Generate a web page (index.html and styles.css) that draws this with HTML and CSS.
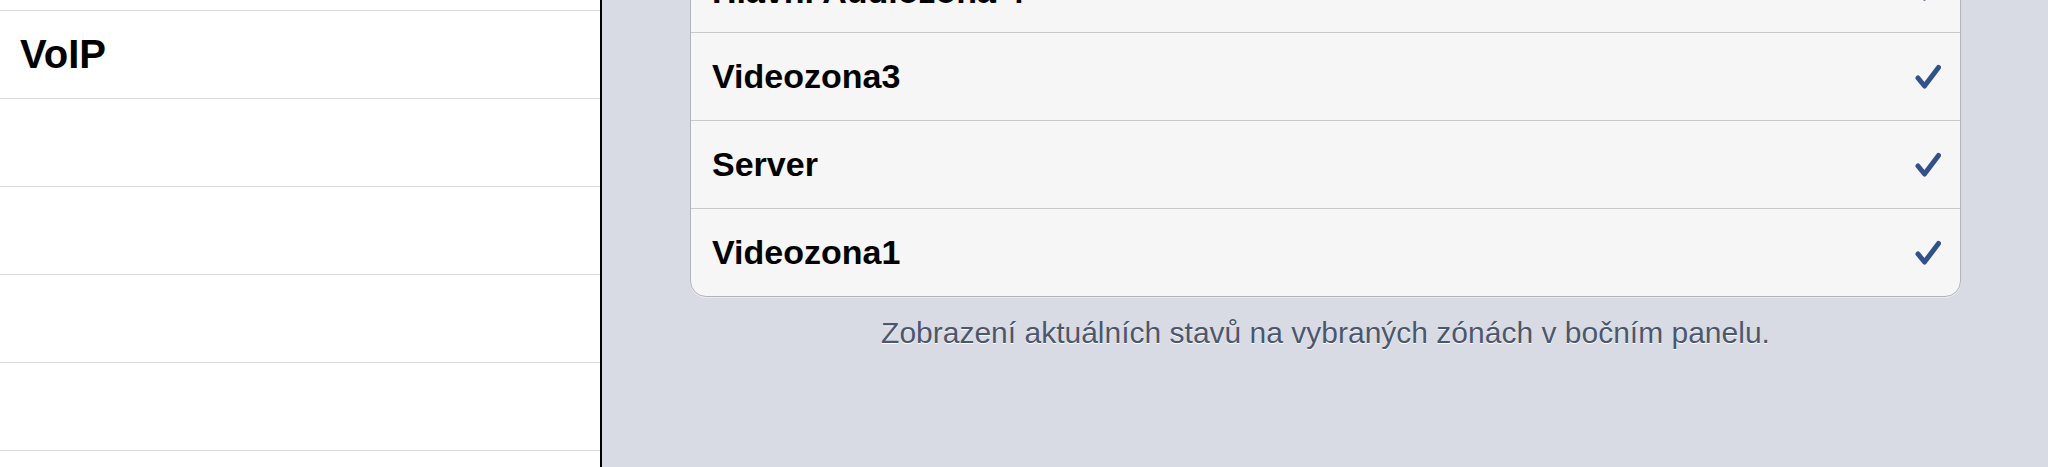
FILE: index.html
```html
<!DOCTYPE html>
<html lang="cs">
<head>
    <meta charset="UTF-8">
    <meta name="viewport" content="width=device-width, initial-scale=1.0">
    <title>Zóny v bočním panelu</title>
    <link rel="stylesheet" href="styles.css">
</head>
<body>

<div class="sidebar">
    <ul class="side-list">
        <li class="side-row"></li>
        <li class="side-row">VoIP</li>
        <li class="side-row"></li>
        <li class="side-row"></li>
        <li class="side-row"></li>
        <li class="side-row"></li>
        <li class="side-row"></li>
    </ul>
</div>

<div class="detail">
    <div class="zone-card">
        <div class="zone-row">
            <span class="zone-name zone-name-cut">Hlavní Audiozona 4</span>
            <svg class="check" viewBox="0 0 26 26"><path d="M3 14 L9.5 22 L23.5 3.5"/></svg>
        </div>
        <div class="zone-row">
            <span class="zone-name">Videozona3</span>
            <svg class="check" viewBox="0 0 26 26"><path d="M3 14 L9.5 22 L23.5 3.5"/></svg>
        </div>
        <div class="zone-row">
            <span class="zone-name">Server</span>
            <svg class="check" viewBox="0 0 26 26"><path d="M3 14 L9.5 22 L23.5 3.5"/></svg>
        </div>
        <div class="zone-row">
            <span class="zone-name">Videozona1</span>
            <svg class="check" viewBox="0 0 26 26"><path d="M3 14 L9.5 22 L23.5 3.5"/></svg>
        </div>
    </div>
    <p class="zone-footer">Zobrazení aktuálních stavů na vybraných zónách v bočním panelu.</p>
</div>

</body>
</html>
```

FILE: styles.css
```css
body {
    margin: 0;
    height: 467px;
    overflow: hidden;
    display: flex;
    font-family: "Liberation Sans", Arial, sans-serif;
}
.sidebar {
    width: 600px;
    flex-shrink: 0;
    background: #fff;
    border-right: 2px solid #000;
    overflow: hidden;
}
.side-list {
    list-style: none;
    margin: -77px 0 0 0;
    padding: 0;
}
.side-row {
    height: 87px;
    border-bottom: 1px solid #d9d9d9;
    display: flex;
    align-items: center;
    padding-left: 20px;
    font-size: 40px;
    font-weight: bold;
    color: #000;
}
.detail {
    flex: 1;
    background: #d8dbe3;
    padding: 0 87px 0 88px;
    overflow: hidden;
}
.zone-card {
    margin-top: -56px;
    background: #f6f6f6;
    border: 1px solid #b2b3b8;
    border-radius: 16px;
    box-shadow: 0 1px 0 #e9ebf0;
}
.zone-row {
    height: 87px;
    display: flex;
    align-items: center;
    justify-content: space-between;
    padding: 0 19px 0 21px;
    border-bottom: 1px solid #c9c9c9;
}
.zone-row:last-child {
    border-bottom: none;
}
.zone-name {
    font-size: 34px;
    font-weight: bold;
    color: #000;
}
.zone-name-cut {
    position: relative;
    top: 3px;
}
.check {
    width: 26px;
    height: 26px;
}
.check path {
    fill: none;
    stroke: #34508a;
    stroke-width: 5;
    stroke-linecap: round;
    stroke-linejoin: round;
}
.zone-footer {
    margin: 19px 0 0 0;
    text-align: center;
    font-size: 30px;
    line-height: 34px;
    color: #4c566c;
    text-shadow: 0 1px 0 #fff;
}
```
